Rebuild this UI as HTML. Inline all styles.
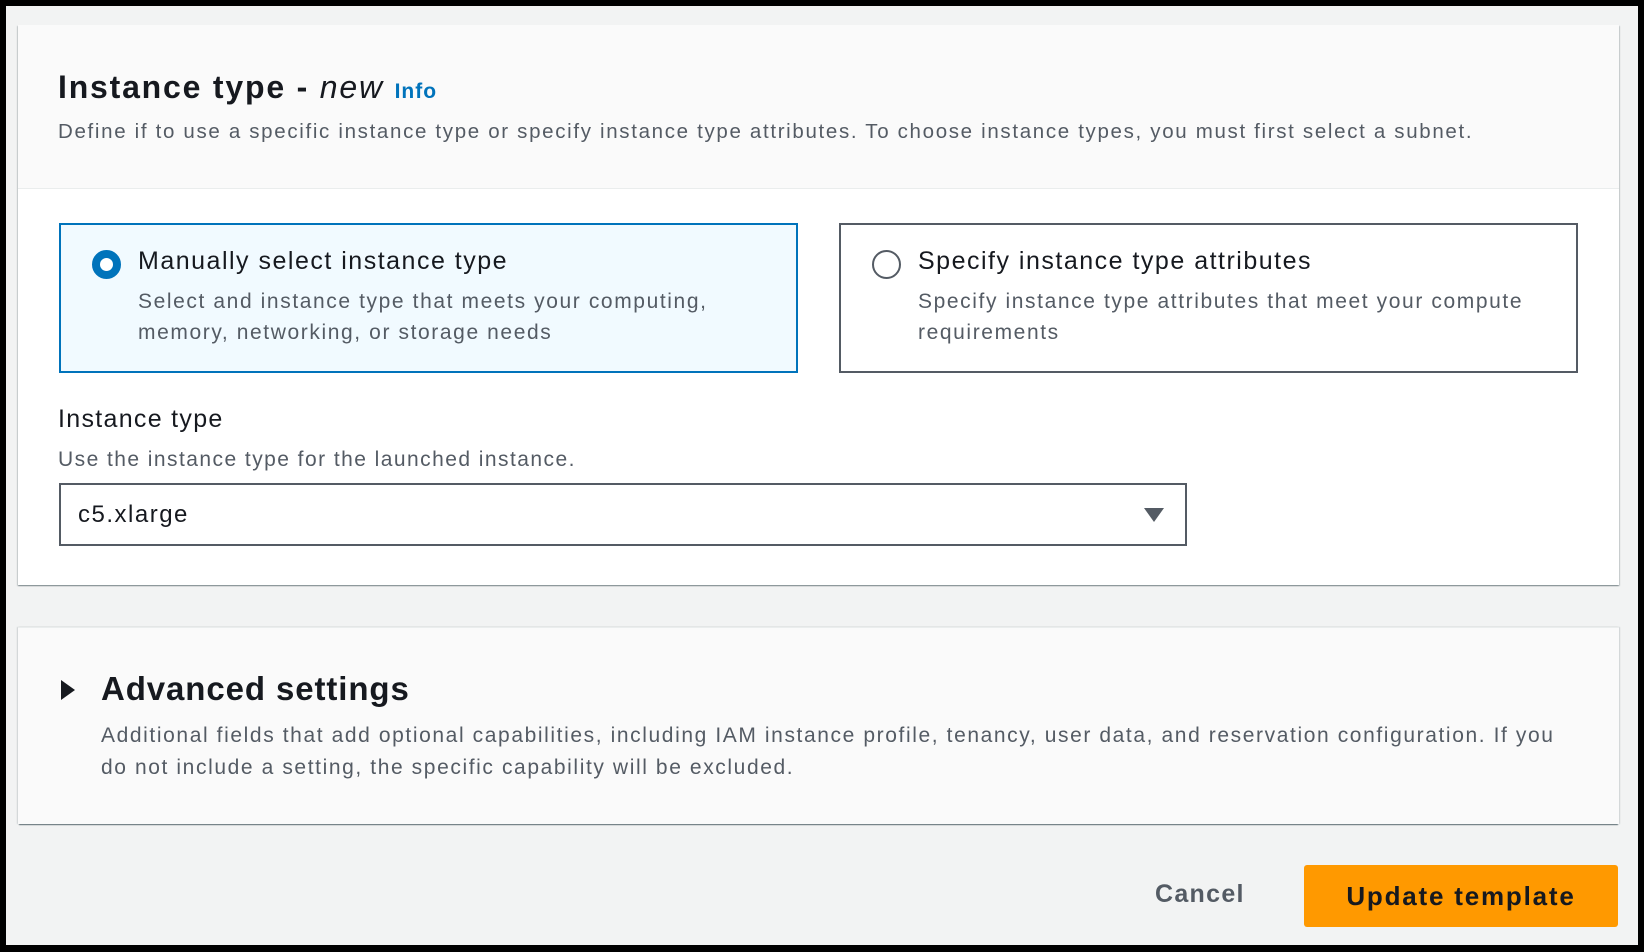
<!DOCTYPE html>
<html><head><meta charset="utf-8"><style>
*{box-sizing:border-box;margin:0;padding:0}
body{width:1644px;height:952px;background:#000;font-family:"Liberation Sans",sans-serif;color:#16191f;position:relative;overflow:hidden}
.frame{position:absolute;left:6px;top:6px;width:1632px;height:939px;background:#f2f3f3}
.abs{position:absolute;white-space:nowrap}
.p1{position:absolute;left:18px;top:25px;width:1601px;height:560px;background:#fff;box-shadow:0 1px 1px 0 rgba(0,28,36,.3),1px 1px 1px 0 rgba(0,28,36,.15),-1px 1px 1px 0 rgba(0,28,36,.15)}
.hdr{position:absolute;left:0;top:0;width:100%;height:164px;background:#fafafa;border-bottom:1px solid #eaeded}
.tile{position:absolute;top:223px;width:739px;height:150px;border:2px solid #545b64;background:#fff}
.tile.sel{border-color:#0073bb;background:#f1faff}
.radio{position:absolute;left:31px;top:25px;width:29px;height:29px;border-radius:50%;border:2px solid #545b64;background:#fff}
.sel .radio{border:8px solid #0073bb}
.tt{position:absolute;left:77px;top:22px;font-size:25px;letter-spacing:1.5px;color:#16191f;white-space:nowrap}
.ts{position:absolute;left:77px;top:61px;font-size:21px;line-height:31px;letter-spacing:1.6px;color:#545b64;white-space:nowrap}
.p2{position:absolute;left:18px;top:627px;width:1601px;height:197px;background:#fafafa;border-top:1px solid #eaeded;box-shadow:0 2px 1px -1px rgba(0,28,36,.6),1px 0 1px 0 rgba(0,28,36,.15),-1px 0 1px 0 rgba(0,28,36,.15)}
</style></head><body>
<div class="frame"></div>
<div class="p1">
 <div class="hdr"></div>
 <div class="abs" style="left:40px;top:44px;font-size:32px;font-weight:bold;letter-spacing:1.8px">Instance type - <i style="font-weight:normal">new</i> <span style="font-size:21px;color:#0073bb;letter-spacing:1px">Info</span></div>
 <div class="abs" style="left:40px;top:95px;font-size:20.5px;letter-spacing:1.67px;color:#545b64">Define if to use a specific instance type or specify instance type attributes. To choose instance types, you must first select a subnet.</div>
 <div class="tile sel" style="left:41px;top:198px"><div class="radio"></div><div class="tt">Manually select instance type</div><div class="ts">Select and instance type that meets your computing,<br>memory, networking, or storage needs</div></div>
 <div class="tile" style="left:821px;top:198px"><div class="radio"></div><div class="tt">Specify instance type attributes</div><div class="ts">Specify instance type attributes that meet your compute<br>requirements</div></div>
 <div class="abs" style="left:40px;top:380px;font-size:25px;letter-spacing:1.3px">Instance type</div>
 <div class="abs" style="left:40px;top:423px;font-size:21px;letter-spacing:1.45px;color:#545b64">Use the instance type for the launched instance.</div>
 <div style="position:absolute;left:41px;top:458px;width:1128px;height:63px;border:2px solid #545b64;background:#fff">
  <div class="abs" style="left:17px;top:16px;font-size:24px;letter-spacing:1.5px">c5.xlarge</div>
  <svg style="position:absolute;left:1082px;top:22px" width="22" height="16" viewBox="0 0 22 16"><path d="M1 1h20L11 15z" fill="#545b64"/></svg>
 </div>
</div>
<div class="p2">
 <svg style="position:absolute;left:42px;top:51px" width="16" height="22" viewBox="0 0 16 22"><path d="M1 1v20l14-10z" fill="#16191f"/></svg>
 <div class="abs" style="left:83px;top:42px;font-size:33px;font-weight:bold;letter-spacing:0.9px">Advanced settings</div>
 <div class="abs" style="left:83px;top:92px;font-size:21px;line-height:32px;letter-spacing:1.6px;color:#545b64">Additional fields that add optional capabilities, including IAM instance profile, tenancy, user data, and reservation configuration. If you<br>do not include a setting, the specific capability will be excluded.</div>
</div>
<div class="abs" style="left:1155px;top:880px;font-size:25px;font-weight:bold;letter-spacing:1.3px;color:#545b64">Cancel</div>
<div style="position:absolute;left:1304px;top:865px;width:314px;height:62px;background:#ff9900;border-radius:3px;font-size:26px;font-weight:bold;letter-spacing:1.8px;text-align:center;line-height:62px">Update template</div>
</body></html>
